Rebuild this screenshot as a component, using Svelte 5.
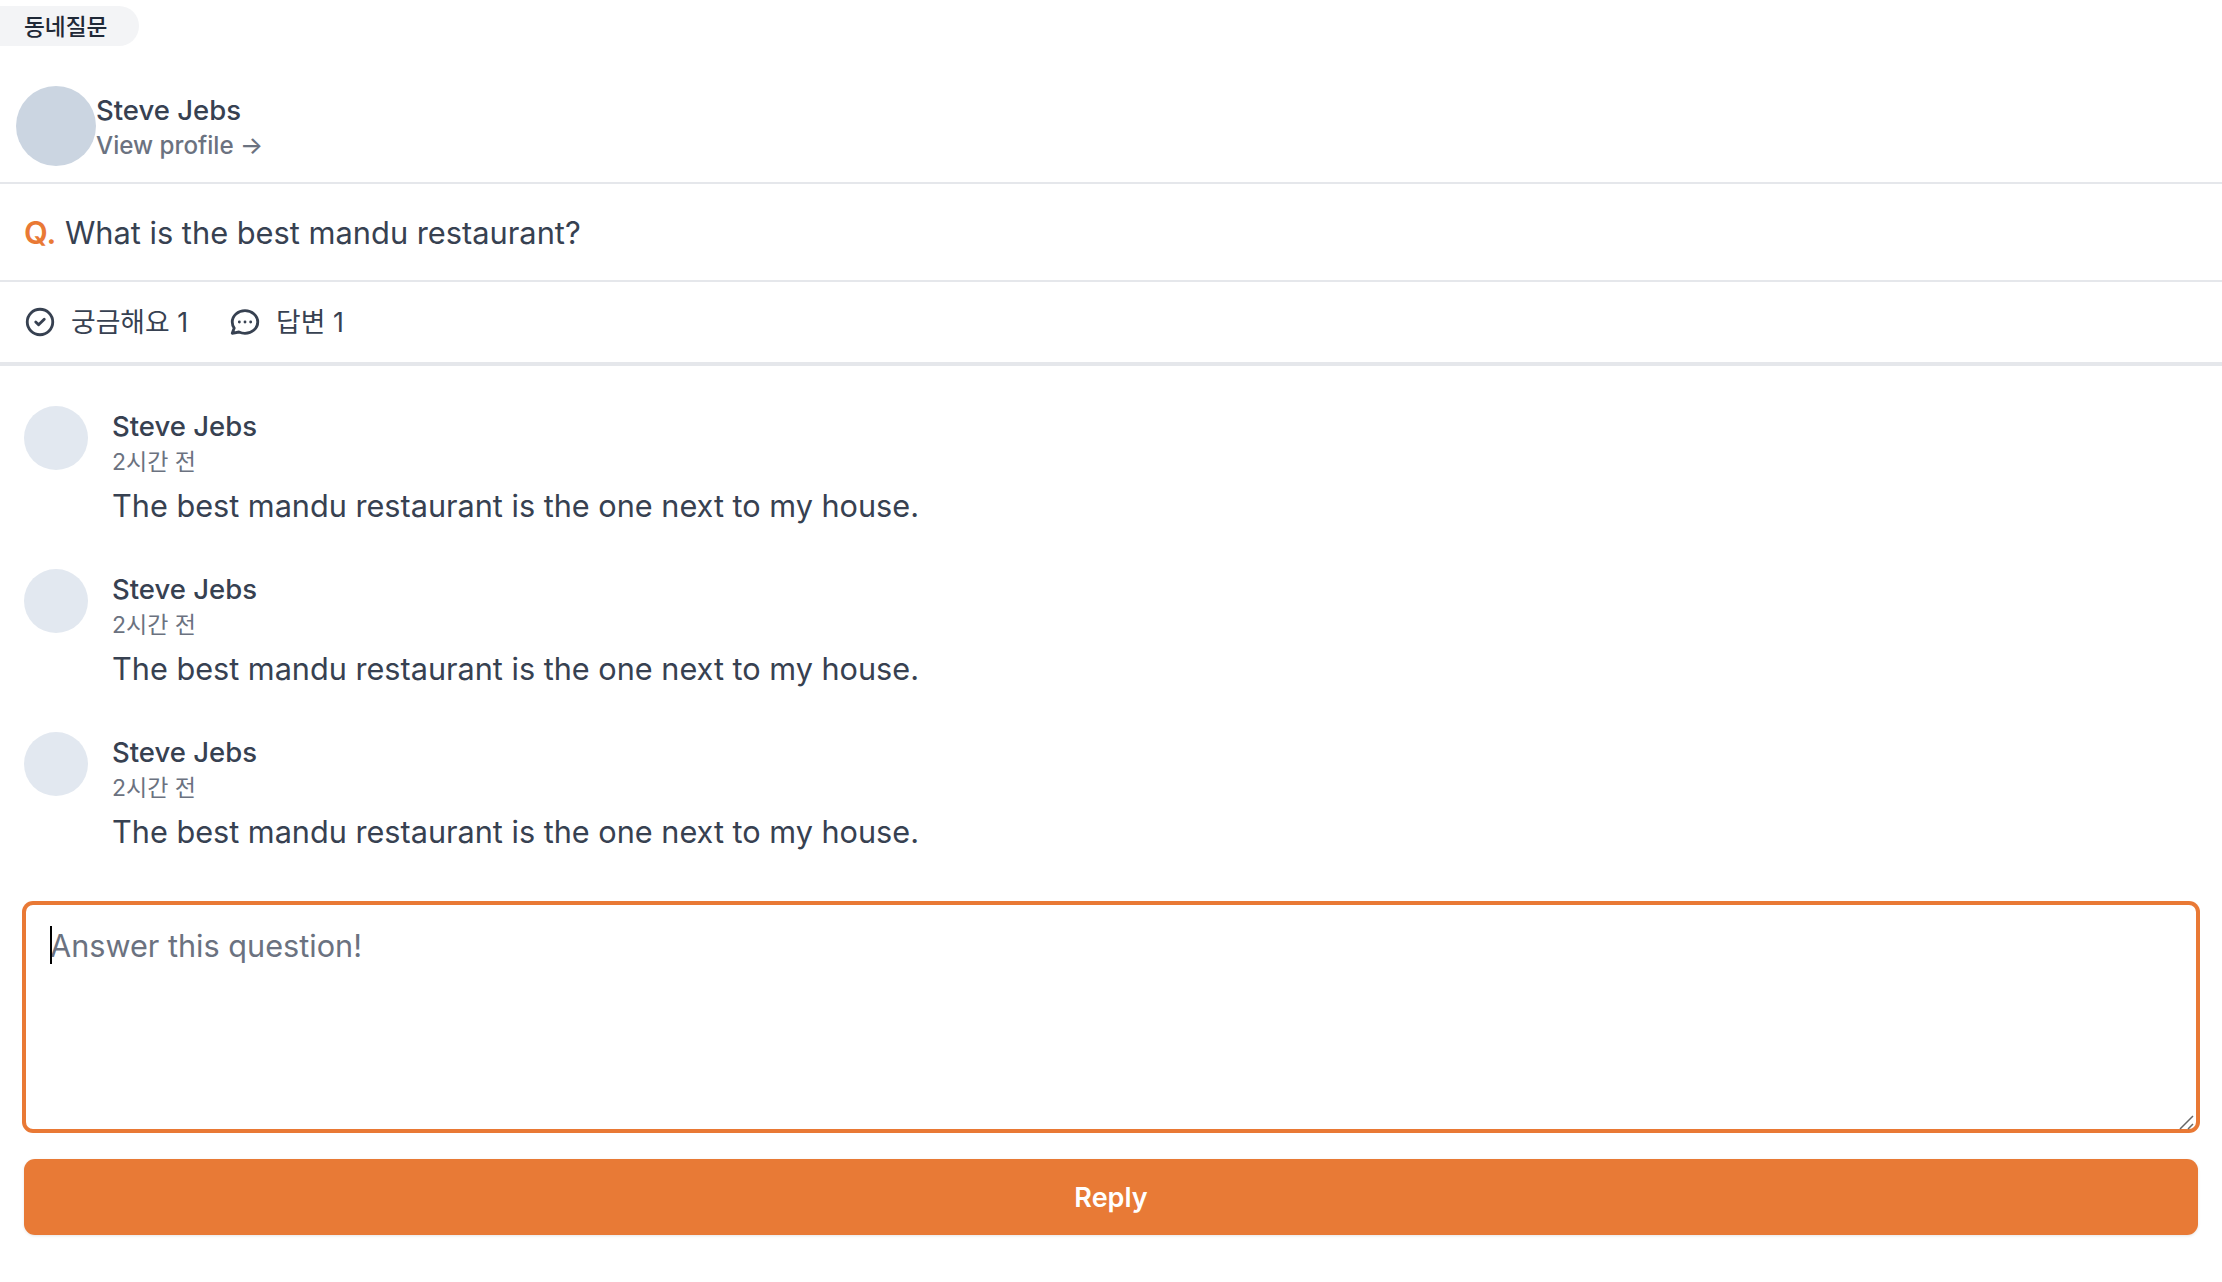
<script>
	const answers = [1, 2, 3].map((id) => ({
		id,
		name: 'Steve Jebs',
		time: '2시간 전',
		text: 'The best mandu restaurant is the one next to my house.'
	}));
</script>

<main class="page">
	<span class="badge">동네질문</span>

	<a class="author" href="#profile">
		<span class="author-avatar"></span>
		<span class="author-info">
			<span class="author-name">Steve Jebs</span>
			<span class="author-link">View profile →</span>
		</span>
	</a>

	<h1 class="question"><span class="q">Q.</span> What is the best mandu restaurant?</h1>

	<div class="stats">
		<span class="stat">
			<svg viewBox="0 0 24 24" fill="none" stroke="currentColor" stroke-width="2" stroke-linecap="round" stroke-linejoin="round">
				<path d="M9 12l2 2 4-4m6 2a9 9 0 11-18 0 9 9 0 0118 0z" />
			</svg>
			<span class="stat-text">궁금해요 1</span>
		</span>
		<span class="stat">
			<svg viewBox="0 0 24 24" fill="none" stroke="currentColor" stroke-width="2" stroke-linecap="round" stroke-linejoin="round">
				<path d="M8 12h.01M12 12h.01M16 12h.01M21 12c0 4.418-4.03 8-9 8a9.863 9.863 0 01-4.255-.949L3 20l1.395-3.72C3.512 15.042 3 13.574 3 12c0-4.418 4.03-8 9-8s9 3.582 9 8z" />
			</svg>
			<span class="stat-text">답변 1</span>
		</span>
	</div>

	<section class="answers">
		{#each answers as a (a.id)}
			<article class="answer">
				<span class="answer-avatar"></span>
				<div class="answer-body">
					<span class="answer-name">{a.name}</span>
					<span class="answer-time">{a.time}</span>
					<p>{a.text}</p>
				</div>
			</article>
		{/each}
	</section>

	<form class="reply" onsubmit={(e) => e.preventDefault()}>
		<div class="field">
			<textarea rows="4" placeholder="Answer this question!"></textarea>
			<span class="caret"></span>
			<svg class="grip" viewBox="0 0 16 15" fill="none" stroke="#666" stroke-width="1.5">
				<path d="M1 14L14 1M9 14l5-5" />
			</svg>
		</div>
		<button type="submit">Reply</button>
	</form>
</main>

<style>
	:global(body) {
		background: #fff;
		font-family: Inter, 'Noto Sans CJK KR', sans-serif;
		color: #374151;
	}
	.page {
		display: flex;
		flex-direction: column;
		height: 1282px;
		padding-top: 6px;
		box-sizing: border-box;
	}
	.badge {
		align-self: flex-start;
		display: flex;
		align-items: center;
		height: 40px;
		width: 139px;
		box-sizing: border-box;
		padding: 0 0 2px 24px;
		background: #f3f4f6;
		border-radius: 0 20px 20px 0;
		font-size: 22.7px;
		font-weight: 500;
		color: #1f2937;
		font-family: 'Noto Sans CJK KR', sans-serif;
	}
	.author {
		display: flex;
		align-items: center;
		height: 112px;
		padding: 24px 0 0 16px;
		border-bottom: 2px solid #e5e7eb;
		text-decoration: none;
		color: inherit;
	}
	.author-avatar {
		width: 80px;
		height: 80px;
		border-radius: 50%;
		background: #cbd5e1;
	}
	.author-info {
		display: flex;
		flex-direction: column;
	}
	.author-name {
		font-size: 27.5px;
		line-height: 36px;
		font-weight: 500;
		margin-top: 4px;
	}
	.author-link {
		font-size: 24.2px;
		line-height: 36px;
		font-weight: 500;
		color: #6b7280;
	}
	.question {
		margin: 0;
		height: 96px;
		display: flex;
		align-items: center;
		gap: 0.28em;
		padding-left: 24px;
		border-bottom: 2px solid #e5e7eb;
		font-size: 30.8px;
		font-weight: 400;
	}
	.q {
		color: #e97935;
		font-weight: 600;
	}
	.stats {
		display: flex;
		gap: 40px;
		height: 80px;
		align-items: center;
		padding-left: 23px;
		border-bottom: 4px solid #e5e7eb;
	}
	.stat {
		display: flex;
		align-items: center;
		gap: 14px;
		font-size: 26.8px;
	}
	.stat-text {
		line-height: 30px;
		margin-top: -1px;
	}
	.stat svg {
		width: 34px;
		height: 34px;
	}
	.answers {
		display: flex;
		flex-direction: column;
		gap: 45px;
		padding: 40px 24px 0;
	}
	.answer {
		display: flex;
		gap: 24px;
		height: 118px;
	}
	.answer-avatar {
		width: 64px;
		height: 64px;
		border-radius: 50%;
		background: #e2e8f0;
		flex: none;
	}
	.answer-body {
		display: flex;
		flex-direction: column;
	}
	.answer-name {
		font-size: 27.5px;
		line-height: 40px;
		font-weight: 500;
	}
	.answer-time {
		font-size: 23px;
		line-height: 30px;
		margin-top: 1px;
		color: #6b7280;
	}
	.answer p {
		margin: 8px 0 0;
		font-size: 30.65px;
		line-height: 42px;
	}
	.reply {
		display: flex;
		flex-direction: column;
		gap: 28px;
		padding: 53px 24px 0;
	}
	.field {
		position: relative;
		display: flex;
	}
	textarea {
		flex: 1;
		height: 228px;
		box-sizing: border-box;
		padding: 20px 24px;
		border: 2px solid #e97935;
		border-radius: 9px;
		box-shadow: 0 0 0 2px #e97935;
		outline: none;
		resize: none;
		font: 30.65px/42px Inter, sans-serif;
		color: #374151;
	}
	textarea::placeholder {
		color: #6b7280;
		opacity: 1;
	}
	.caret {
		position: absolute;
		left: 26px;
		top: 23px;
		width: 2px;
		height: 38px;
		background: #000;
	}
	.grip {
		position: absolute;
		right: 3px;
		bottom: 1px;
		width: 16px;
		height: 15px;
	}
	button {
		height: 76px;
		border: none;
		border-radius: 11px;
		background: #e87a36;
		color: #fff;
		font: 600 27px Inter, sans-serif;
		box-shadow: 0 1px 3px rgb(0 0 0 / 0.1);
	}
</style>
